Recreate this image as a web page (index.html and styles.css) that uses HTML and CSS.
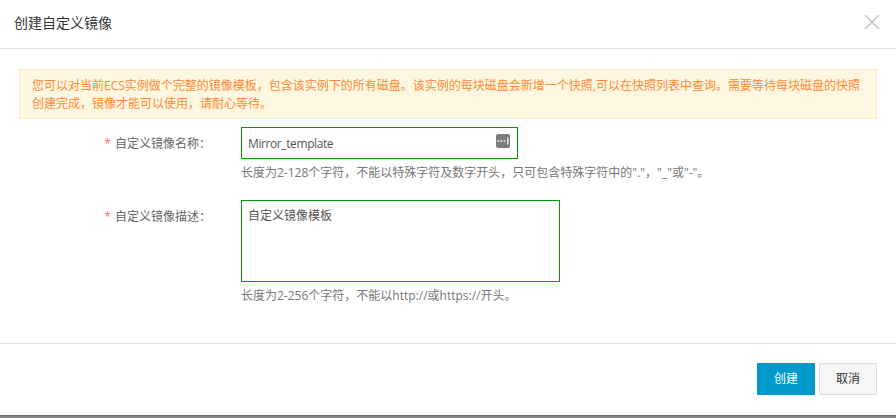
FILE: index.html
```html
<!DOCTYPE html>
<html lang="zh">
<head>
<meta charset="utf-8">
<title>创建自定义镜像</title>
<link rel="stylesheet" href="styles.css">
</head>
<body>
<div class="dialog">
  <header class="head">
    <h1 class="title">创建自定义镜像</h1>
    <svg class="close" width="16" height="16" viewBox="0 0 16 16"><path d="M1 1L15 15M15 1L1 15" stroke="#c8c8c8" stroke-width="1.6" fill="none"/></svg>
  </header>
  <main class="body">
    <div class="alert">您可以对当前ECS实例做个完整的镜像模板<span class="tc">，</span>包含该实例下的所有磁盘。该实例的每块磁盘会新增一个快照,可以在快照列表中查询。需要等待每块磁盘的快照创建完成<span class="tc">，</span>镜像才能可以使用<span class="tc">，</span>请耐心等待。</div>
    <div class="row row-name">
      <div class="label"><span class="star">*</span>自定义镜像名称<span class="tc">：</span></div>
      <div class="field">
        <div class="box input"><span class="value">Mirror_template</span>
          <svg class="key" width="14" height="14" viewBox="0 0 14 14"><rect width="14" height="14" rx="2" fill="#7d7d7d"/><path d="M1.5 7h1.6M4.5 7h1.6M7.5 7h1.6" stroke="#fff" stroke-width="1.6"/><path d="M11.8 3.5v7" stroke="#fff" stroke-width="1.2"/></svg>
        </div>
        <p class="hint">长度为2-128个字符<span class="tc">，</span>不能以特殊字符及数字开头<span class="tc">，</span>只可包含特殊字符中的"."<span class="tc">，</span>"_"或"-"。</p>
      </div>
    </div>
    <div class="row row-desc">
      <div class="label"><span class="star">*</span>自定义镜像描述<span class="tc">：</span></div>
      <div class="field">
        <div class="box area">自定义镜像模板</div>
        <p class="hint">长度为2-256个字符<span class="tc">，</span>不能以http://或https://开头。</p>
      </div>
    </div>
  </main>
  <footer class="foot">
    <button class="btn primary">创建</button>
    <button class="btn plain">取消</button>
  </footer>
  <div class="edge"></div>
</div>
</body>
</html>
```
FILE: styles.css
```css
* { box-sizing: border-box; }
html, body { margin: 0; height: 100%; }
body {
  background: #fff;
  overflow: hidden;
  font: 12px/18px "Open Sans", "Noto Sans CJK SC", sans-serif;
  color: #666;
}
.tc { font-family: "Noto Sans CJK TC", sans-serif; line-height: 1; }
.dialog {
  height: 418px;
  display: flex;
  flex-direction: column;
}
.head {
  height: 49px;
  flex: none;
  display: flex;
  align-items: center;
  justify-content: space-between;
  padding: 0 16px 5px 14px;
  border-bottom: 1px solid #e5e5e5;
}
.title { margin: 0 0 -3px; font-size: 14px; font-weight: 400; color: #333; }
.body { flex: 1; padding: 20px 19px 0; }
.alert {
  width: 858px;
  height: 50px;
  padding: 7px 12px;
  background: #fdf7e2;
  border: 1px solid #faebc4;
  color: #ff8a33;
}
.row { display: flex; }
.row-name { margin-top: 8px; }
.row-desc { margin-top: 18px; }
.label {
  width: 222px;
  padding: 8px 30px 0 0;
  text-align: right;
  color: #666;
}
.star { color: #ff6a5c; margin-right: 4px; }
.box { border: 1px solid #090; color: #555; }
.input {
  width: 277px;
  height: 32px;
  display: flex;
  align-items: center;
  justify-content: space-between;
  padding: 1px 7px 0 6px;
}
.value { letter-spacing: -.4px; }
.key { margin-top: -6px; }
.area { width: 319px; height: 82px; padding: 6px; }
.hint { margin: 5px 0 0; color: #777; }
.foot {
  height: 72px;
  flex: none;
  display: flex;
  justify-content: flex-end;
  gap: 4px;
  padding: 19px 19px 0 0;
  border-top: 1px solid #e5e5e5;
}
.btn {
  width: 58px;
  height: 32px;
  font: inherit;
  padding: 0;
  border: 1px solid transparent;
}
.primary { background: #0099cc; color: #fff; }
.plain { background: #f6f6f6; border: 1px solid #ddd; color: #333; }
.edge { height: 3px; flex: none; background: linear-gradient(#666, #999); }
```
